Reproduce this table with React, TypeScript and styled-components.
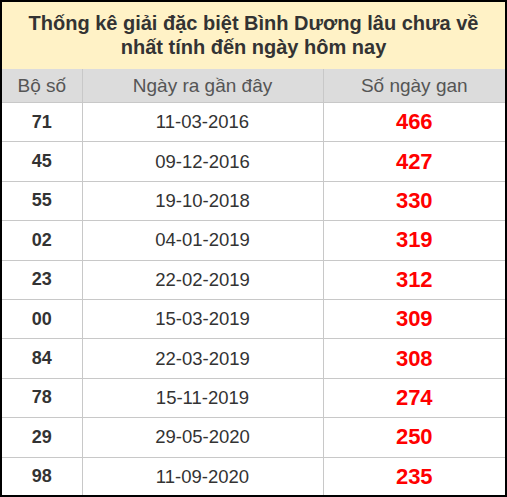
import React from 'react';
import styled, { createGlobalStyle } from 'styled-components';

type Row = {
  pair: string;
  date: string;
  gap: number;
};

const rows: Row[] = [
  { pair: '71', date: '11-03-2016', gap: 466 },
  { pair: '45', date: '09-12-2016', gap: 427 },
  { pair: '55', date: '19-10-2018', gap: 330 },
  { pair: '02', date: '04-01-2019', gap: 319 },
  { pair: '23', date: '22-02-2019', gap: 312 },
  { pair: '00', date: '15-03-2019', gap: 309 },
  { pair: '84', date: '22-03-2019', gap: 308 },
  { pair: '78', date: '15-11-2019', gap: 274 },
  { pair: '29', date: '29-05-2020', gap: 250 },
  { pair: '98', date: '11-09-2020', gap: 235 },
];

function App() {
  return (
    <>
      <GlobalStyle />
      <Frame>
        <StatTable>
          <colgroup>
            <Col width={80} />
            <Col width={241} />
            <col />
          </colgroup>
          <thead>
            <tr>
              <TitleCell colSpan={3}>
                Thống kê giải đặc biệt Bình Dương lâu chưa về nhất tính đến ngày hôm nay
              </TitleCell>
            </tr>
            <tr>
              <HeadCell>Bộ số</HeadCell>
              <HeadCell>Ngày ra gần đây</HeadCell>
              <HeadCell>Số ngày gan</HeadCell>
            </tr>
          </thead>
          <tbody>
            {rows.map((r) => (
              <tr key={r.pair}>
                <PairCell>{r.pair}</PairCell>
                <DateCell>{r.date}</DateCell>
                <GapCell>{r.gap}</GapCell>
              </tr>
            ))}
          </tbody>
        </StatTable>
      </Frame>
    </>
  );
}

const GlobalStyle = createGlobalStyle`
html, body {
  margin: 0;
  padding: 0;
  background: #000;
}
`

const Frame = styled.div`
width: 503px;
height: 493px;
margin: 2px;
background: #fff;
overflow: hidden;
font-family: "Liberation Sans", Arial, sans-serif;
`

const StatTable = styled.table`
width: 100%;
border-collapse: collapse;
table-layout: fixed;
`

const Col = styled.col<{ width: number }>`
width: ${(p) => p.width}px;
`

const TitleCell = styled.th`
background: #fff2c6;
color: #333;
font-size: 20px;
font-weight: bold;
line-height: 24px;
padding: 9px 6px 10px;
text-align: center;
`

const HeadCell = styled.th`
background: #dcdcdc;
color: #555;
font-size: 19px;
font-weight: normal;
height: 33px;
padding: 0;
text-align: center;
border-left: 1px solid #c8c8c8;
&:first-child {
  border-left: none;
}
`

const BodyCell = styled.td`
height: 38.4px;
padding: 0;
text-align: center;
color: #333;
font-size: 18.5px;
border-top: 1px solid #c8c8c8;
border-left: 1px solid #c8c8c8;
&:first-child {
  border-left: none;
}
`

const PairCell = styled(BodyCell)`
font-size: 18px;
font-weight: bold;
`

const DateCell = styled(BodyCell)``

const GapCell = styled(BodyCell)`
color: #ff0000;
font-size: 22px;
font-weight: bold;
`

export default App;
